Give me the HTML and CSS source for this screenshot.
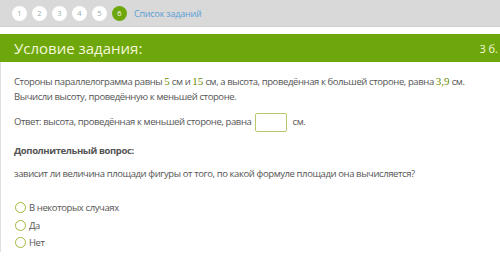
FILE: index.html
```html
<!DOCTYPE html>
<html lang="ru">
<head>
	<meta charset="UTF-8">
	<title>Условие задания</title>
	<link rel="stylesheet" href="styles.css">
</head>
<body>
	<div class="steps">
		<span class="step">1</span><span class="step">2</span><span class="step">3</span><span class="step">4</span><span class="step">5</span><span class="step active">6</span>
		<a class="list" href="#">Список заданий</a>
	</div>
	<div class="head">
		<span class="title">Условие задания:</span>
		<span class="score">3 б.</span>
	</div>
	<div class="task">
		<p>Стороны параллелограмма равны <span class="num">5</span> см и <span class="num">15</span> см, а высота, проведённая к большей стороне, равна <span class="num">3,9</span> см.<br>Вычисли высоту, проведённую к меньшей стороне.</p>
		<p class="answer">Ответ: высота, проведённая к меньшей стороне, равна <input type="text" class="field"> см.</p>
		<p class="extra">Дополнительный вопрос:</p>
		<p class="question">зависит ли величина площади фигуры от того, по какой формуле площади она вычисляется?</p>
		<ul class="options">
			<li><span class="radio"></span>В некоторых случаях</li>
			<li><span class="radio"></span>Да</li>
			<li><span class="radio"></span>Нет</li>
		</ul>
	</div>
</body>
</html>
```

FILE: styles.css
```css
body{margin:0;background:#fff;font-family:"Open Sans","Noto Sans",sans-serif;color:#555;font-size:9.5px;letter-spacing:-0.4px;}

.steps{display:flex;align-items:center;height:26px;padding-left:12px;background:#d9d9d9;border-bottom:1px solid #cfcfcf;letter-spacing:0;}
.step{display:flex;align-items:center;justify-content:center;width:15px;height:15px;margin-right:5px;border-radius:50%;background:#fff;color:#9aa;font-size:7.5px;}
.step.active{background:#6ea70c;color:#fff;}
.list{margin-left:2px;color:#5a9fd6;text-decoration:none;font-size:9px;letter-spacing:-0.2px;}

.head{display:flex;justify-content:space-between;align-items:center;height:28px;margin-top:7px;padding:0 2px 0 14px;background:#6ea70c;color:#f4f7d8;letter-spacing:0;}
.title{font-size:15px;}
.score{font-size:11px;}

.task{padding:12px 14px 0 13px;border-left:1px solid #e0e0e0;}
.task p{margin:0;line-height:15px;}
.num{color:#6a8d00;font-family:"Liberation Serif","DejaVu Serif",serif;font-size:11px;line-height:1;letter-spacing:0;}

.answer{margin-top:9px !important;}
.field{width:30px;height:17px;margin:0 3px 0 2px;padding:0;border:1px solid #b9c66d;border-radius:2px;vertical-align:middle;}

.extra{margin-top:11px !important;font-weight:bold;}
.question{margin-top:8px !important;}

.options{margin:18px 0 0;padding:0;list-style:none;}
.options li{display:flex;align-items:center;height:17.5px;}
.radio{width:9px;height:9px;margin:0 3px 0 1px;border:1.5px solid #a7b53a;border-radius:50%;}
```
